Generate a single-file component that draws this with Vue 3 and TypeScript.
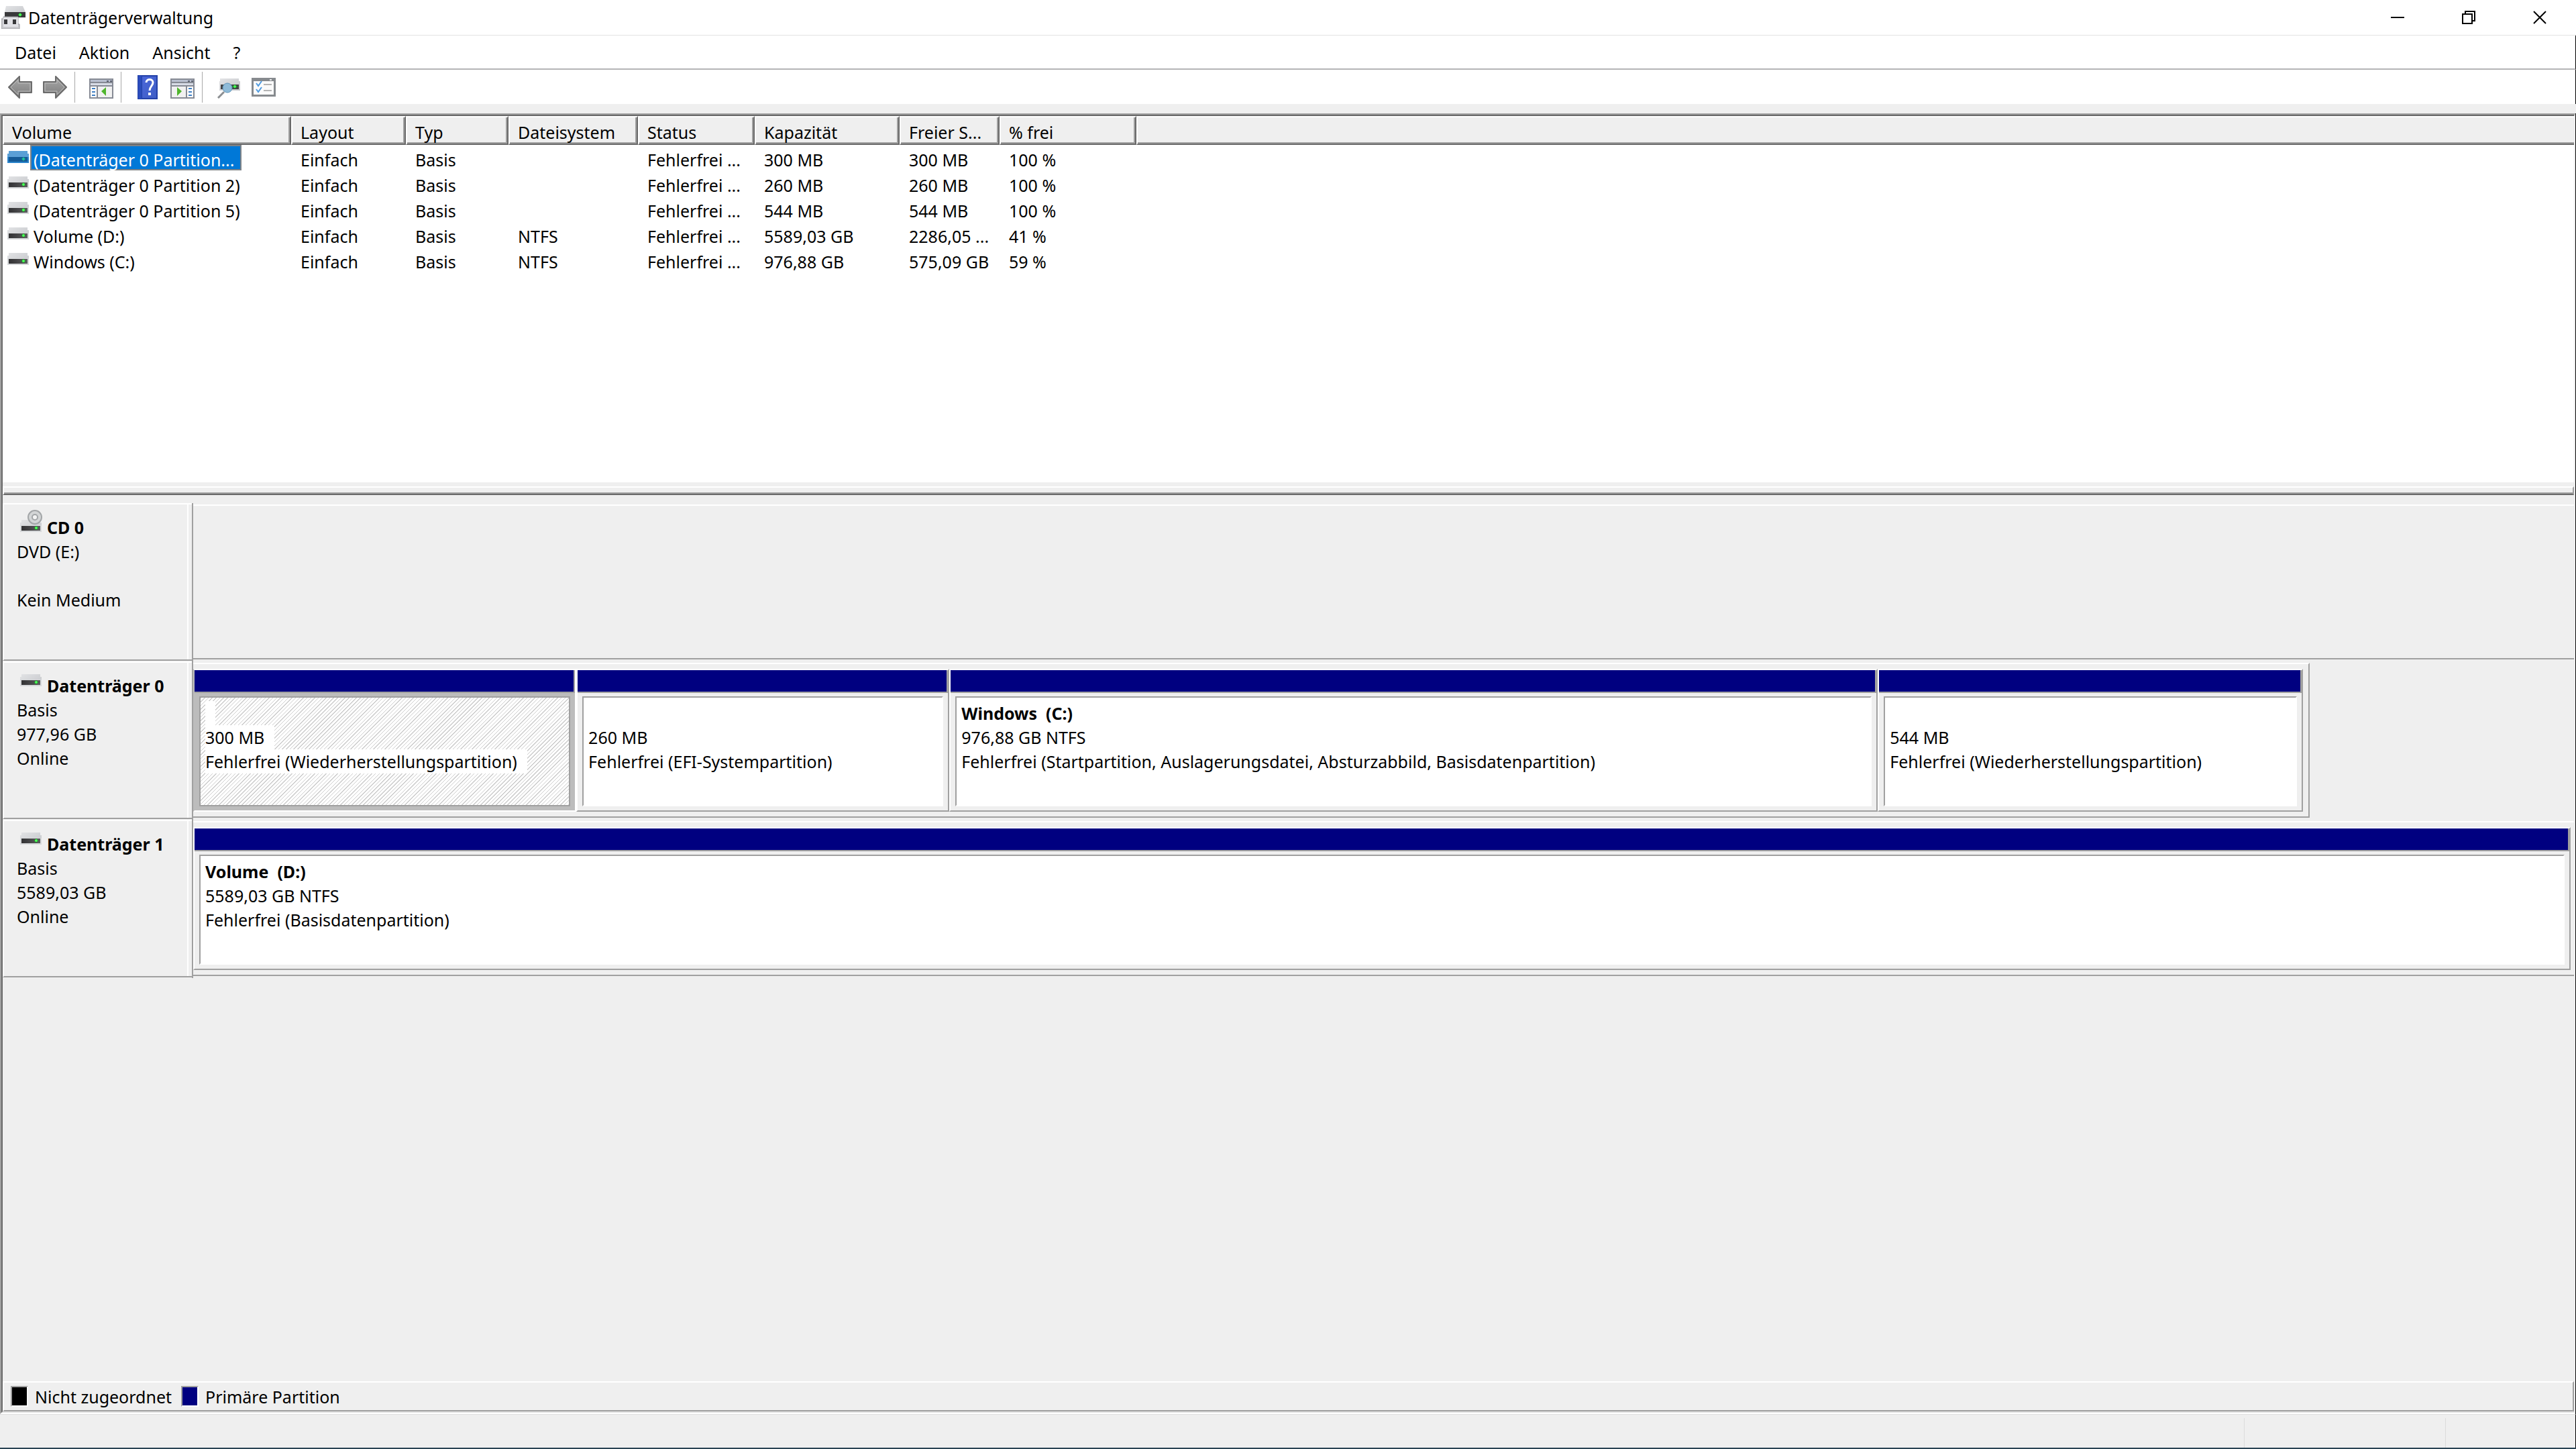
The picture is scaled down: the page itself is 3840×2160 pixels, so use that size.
<script setup lang="ts">
import { ref } from 'vue'

interface Volume {
  name: string
  layout: string
  type: string
  fs: string
  status: string
  capacity: string
  free: string
  percent: string
}

interface Partition {
  title: string
  size: string
  state: string
  share: number
  selected?: boolean
}

interface Disk {
  name: string
  kind: 'cd' | 'hdd'
  lines: string[]
  extent: number
  partitions: Partition[]
}

const menus = ['Datei', 'Aktion', 'Ansicht', '?']

const columns = ['Volume', 'Layout', 'Typ', 'Dateisystem', 'Status', 'Kapazität', 'Freier S...', '% frei', '']

const volumes: Volume[] = [
  { name: '(Datenträger 0 Partition...', layout: 'Einfach', type: 'Basis', fs: '', status: 'Fehlerfrei ...', capacity: '300 MB', free: '300 MB', percent: '100 %' },
  { name: '(Datenträger 0 Partition 2)', layout: 'Einfach', type: 'Basis', fs: '', status: 'Fehlerfrei ...', capacity: '260 MB', free: '260 MB', percent: '100 %' },
  { name: '(Datenträger 0 Partition 5)', layout: 'Einfach', type: 'Basis', fs: '', status: 'Fehlerfrei ...', capacity: '544 MB', free: '544 MB', percent: '100 %' },
  { name: 'Volume (D:)', layout: 'Einfach', type: 'Basis', fs: 'NTFS', status: 'Fehlerfrei ...', capacity: '5589,03 GB', free: '2286,05 ...', percent: '41 %' },
  { name: 'Windows (C:)', layout: 'Einfach', type: 'Basis', fs: 'NTFS', status: 'Fehlerfrei ...', capacity: '976,88 GB', free: '575,09 GB', percent: '59 %' },
]

const selectedRow = ref(0)

const disks: Disk[] = [
  { name: 'CD 0', kind: 'cd', lines: ['DVD (E:)', '', 'Kein Medium'], extent: 100, partitions: [] },
  {
    name: 'Datenträger 0',
    kind: 'hdd',
    lines: ['Basis', '977,96 GB', 'Online'],
    extent: 88.9,
    partitions: [
      { title: '', size: '300 MB', state: 'Fehlerfrei (Wiederherstellungspartition)', share: 570, selected: true },
      { title: '', size: '260 MB', state: 'Fehlerfrei (EFI-Systempartition)', share: 555 },
      { title: 'Windows  (C:)', size: '976,88 GB NTFS', state: 'Fehlerfrei (Startpartition, Auslagerungsdatei, Absturzabbild, Basisdatenpartition)', share: 1387 },
      { title: '', size: '544 MB', state: 'Fehlerfrei (Wiederherstellungspartition)', share: 633 },
    ],
  },
  {
    name: 'Datenträger 1',
    kind: 'hdd',
    lines: ['Basis', '5589,03 GB', 'Online'],
    extent: 100,
    partitions: [{ title: 'Volume  (D:)', size: '5589,03 GB NTFS', state: 'Fehlerfrei (Basisdatenpartition)', share: 1 }],
  },
]
</script>

<template>
  <div class="window">
    <svg class="defs" width="0" height="0" aria-hidden="true">
      <defs>
        <linearGradient id="lid" x1="0" y1="0" x2="1" y2="1">
          <stop offset="0" stop-color="#e2e3e5" />
          <stop offset="1" stop-color="#c3c5c9" />
        </linearGradient>
        <linearGradient id="face" x1="0" y1="0" x2="1" y2="0">
          <stop offset="0" stop-color="#323234" />
          <stop offset="1" stop-color="#5c5c5e" />
        </linearGradient>
        <linearGradient id="steel" x1="0" y1="0" x2="0" y2="1">
          <stop offset="0" stop-color="#a9a9a9" />
          <stop offset="1" stop-color="#7b7b7b" />
        </linearGradient>
        <linearGradient id="book" x1="0" y1="0" x2="1" y2="1">
          <stop offset="0" stop-color="#4a66d8" />
          <stop offset="1" stop-color="#3f5ec6" />
        </linearGradient>
        <symbol id="drive" viewBox="0 0 32 19">
          <path d="M2 0H30V4H32V18H0V4H2Z" fill="url(#lid)" />
          <path d="M0 8H32V18H0Z" fill="#d6d8da" />
          <path d="M2 9H30V16H2Z" fill="url(#face)" />
          <path d="M21 12H27M24 9V15" stroke="#1d8a26" stroke-width="2" />
          <circle cx="24" cy="12" r="2" fill="#4dff5a" />
        </symbol>
        <symbol id="drive-selected" viewBox="0 0 32 19">
          <path d="M2 0H30V4H32V18H0V4H2Z" fill="#5a9fd6" />
          <path d="M0 9H32V18H0Z" fill="#2a84cc" />
          <path d="M2 9H30V16H2Z" fill="#155a96" />
          <path d="M21 12H27M24 9V15" stroke="#127f8e" stroke-width="2" />
          <circle cx="24" cy="12" r="2" fill="#23c59a" />
        </symbol>
      </defs>
    </svg>

    <header class="titlebar">
      <svg class="app-icon" viewBox="0 0 36 34" width="36" height="34" aria-hidden="true">
        <path d="M7 0H32L36 9V17H5V9Z" fill="url(#lid)" />
        <path d="M5 9H36V17H5Z" fill="#39393b" />
        <path d="M25 13H31M28 10V16" stroke="#1d8a26" stroke-width="2" />
        <circle cx="28" cy="13" r="2" fill="#4dff5a" />
        <path d="M3 16H25V27H27V34H0V19H3Z" fill="#c9c9cd" stroke="#98989c" />
        <path d="M3 17H25V31H3Z" fill="#e2e2e6" />
        <path d="M4 20H9V27H4ZM17 20H22V27H17Z" fill="#3a3a3c" />
      </svg>
      <h1>Datenträgerverwaltung</h1>
      <div class="controls">
        <button type="button" aria-label="Minimieren">
          <svg viewBox="0 0 20 20" width="20" height="20"><path d="M0 10H20" stroke="#000" stroke-width="2" /></svg>
        </button>
        <button type="button" aria-label="Verkleinern">
          <svg viewBox="0 0 20 20" width="20" height="20"><path d="M1 5H15V19H1ZM5 5V1H19V15H15" fill="none" stroke="#000" stroke-width="2" /></svg>
        </button>
        <button type="button" aria-label="Schließen">
          <svg viewBox="0 0 20 20" width="20" height="20"><path d="M1 1L19 19M19 1L1 19" stroke="#000" stroke-width="2" /></svg>
        </button>
      </div>
    </header>

    <nav class="menubar">
      <button v-for="m in menus" :key="m" type="button">{{ m }}</button>
    </nav>

    <div class="toolbar">
      <button type="button" aria-label="Zurück">
        <svg viewBox="0 0 36 34" width="36" height="34">
          <path d="M1 17L17 1V9H35V25H17V33Z" fill="url(#steel)" stroke="#6c6c6c" stroke-width="2" stroke-linejoin="round" />
          <path d="M4 17L15 6V11H33V23H15V28Z" fill="none" stroke="#bdbdbd" />
        </svg>
      </button>
      <button type="button" aria-label="Vorwärts">
        <svg viewBox="0 0 36 34" width="36" height="34">
          <path d="M35 17L19 1V9H1V25H19V33Z" fill="url(#steel)" stroke="#6c6c6c" stroke-width="2" stroke-linejoin="round" />
          <path d="M32 17L21 6V11H3V23H21V28Z" fill="none" stroke="#bdbdbd" />
        </svg>
      </button>
      <span class="sep"></span>
      <button type="button" class="low" aria-label="Konsolenstruktur anzeigen">
        <svg viewBox="0 0 36 30" width="36" height="30">
          <path d="M0 0H36V30H0Z" fill="#868a94" />
          <path d="M2 2H34V5H2Z" fill="#b9c0d0" />
          <path d="M2 7H34V10H2Z" fill="#d8dce6" />
          <path d="M26 3H29V5H26ZM31 3H34V5H31Z" fill="#5c6270" />
          <path d="M2 12H11V28H2Z" fill="#fff" />
          <path d="M13 12H34V28H13Z" fill="#f1f1f1" />
          <path d="M4 15H9M4 20H9M4 25H9" stroke="#3f7fc4" stroke-width="2" />
          <path d="M25 13V26L18 19Z" fill="#4fb52d" />
        </svg>
      </button>
      <span class="sep"></span>
      <button type="button" aria-label="Hilfe">
        <svg viewBox="0 0 30 36" width="30" height="36">
          <path d="M0 0H30V36H0Z" fill="#2341a8" />
          <path d="M7 2H28V34H7Z" fill="url(#book)" />
          <path d="M1 1H6V35H1Z" fill="#2b4cbc" />
          <path d="M13 11C13 5 23 5 23 11C23 16 18 17 18 23" fill="none" stroke="#fff" stroke-width="3" />
          <path d="M16 26H20V30H16Z" fill="#fff" />
        </svg>
      </button>
      <button type="button" class="low" aria-label="Aktionsbereich anzeigen">
        <svg viewBox="0 0 36 30" width="36" height="30">
          <path d="M0 0H36V30H0Z" fill="#868a94" />
          <path d="M2 2H34V5H2Z" fill="#b9c0d0" />
          <path d="M2 7H34V10H2Z" fill="#d8dce6" />
          <path d="M26 3H29V5H26ZM31 3H34V5H31Z" fill="#5c6270" />
          <path d="M25 12H34V28H25Z" fill="#fff" />
          <path d="M2 12H23V28H2Z" fill="#f1f1f1" />
          <path d="M27 15H32M27 20H32M27 25H32" stroke="#3f7fc4" stroke-width="2" />
          <path d="M10 13V26L17 19Z" fill="#4fb52d" />
        </svg>
      </button>
      <span class="sep"></span>
      <button type="button" class="low" aria-label="Datenträger neu einlesen">
        <svg viewBox="0 0 34 30" width="34" height="30">
          <path d="M4 0H32V4H34V18H3V4H4Z" fill="url(#lid)" />
          <path d="M5 9H32V16H5Z" fill="#444446" />
          <path d="M22 12H30M26 9V15" stroke="#1d8a26" stroke-width="2" />
          <circle cx="26" cy="12" r="2" fill="#4dff5a" />
          <path d="M1 29L10 20" stroke="#8c8f92" stroke-width="3" />
          <circle cx="15" cy="14" r="7" fill="#8fbbd8" stroke="#5d93b8" />
        </svg>
      </button>
      <button type="button" aria-label="Eigenschaften">
        <svg viewBox="0 0 36 28" width="36" height="28">
          <path d="M0 0H36V28H0Z" fill="#868a8e" />
          <path d="M3 5H33V25H3Z" fill="#fbfbfb" />
          <path d="M27 2H30V4H27Z" fill="#e8e8e8" />
          <path d="M7 8L10 12L15 5M7 17L10 21L15 14" fill="none" stroke="#4f9be0" stroke-width="2" />
          <path d="M18 10H30M18 19H30" stroke="#b4b4b4" stroke-width="2" />
        </svg>
      </button>
    </div>

    <main class="frame">
      <div class="frame-inner">
        <section class="list">
          <table>
            <colgroup>
              <col class="w-volume" /><col class="w-layout" /><col class="w-type" /><col class="w-fs" />
              <col class="w-status" /><col class="w-capacity" /><col class="w-free" /><col class="w-percent" /><col />
            </colgroup>
            <thead>
              <tr>
                <th v-for="(c, i) in columns" :key="i" scope="col">{{ c }}</th>
              </tr>
            </thead>
            <tbody>
              <tr v-for="(v, i) in volumes" :key="v.name" @click="selectedRow = i">
                <td class="name">
                  <div class="name-box">
                    <svg class="row-icon" viewBox="0 0 32 19" width="32" height="19" aria-hidden="true">
                      <use :href="i === selectedRow ? '#drive-selected' : '#drive'" />
                    </svg>
                    <span class="name-text" :class="{ selected: i === selectedRow }">{{ v.name }}</span>
                  </div>
                </td>
                <td>{{ v.layout }}</td>
                <td>{{ v.type }}</td>
                <td>{{ v.fs }}</td>
                <td>{{ v.status }}</td>
                <td>{{ v.capacity }}</td>
                <td>{{ v.free }}</td>
                <td>{{ v.percent }}</td>
                <td></td>
              </tr>
            </tbody>
          </table>
        </section>

        <div class="splitter"></div>

        <section class="disks">
          <article v-for="d in disks" :key="d.name" class="disk">
            <div class="disk-label">
              <h2>
                <svg v-if="d.kind === 'cd'" class="disk-icon cd" viewBox="0 0 34 34" width="34" height="34" aria-hidden="true">
                  <use href="#drive" x="0" y="15" width="32" height="19" />
                  <circle cx="22" cy="11" r="10" fill="#d3d5d6" stroke="#a3a6a8" stroke-width="2" />
                  <circle cx="22" cy="11" r="4" fill="#f4f4f4" stroke="#a3a6a8" stroke-width="2" />
                </svg>
                <svg v-else class="disk-icon" viewBox="0 0 32 19" width="32" height="19" aria-hidden="true">
                  <use href="#drive" />
                </svg>
                {{ d.name }}
              </h2>
              <p v-for="(l, i) in d.lines" :key="i">{{ l }}</p>
            </div>
            <div class="disk-graph">
              <div
                class="strip"
                :class="{ closed: d.extent < 100 }"
                :style="{ width: d.extent + '%' }"
              >
                <div
                  v-for="(p, i) in d.partitions"
                  :key="i"
                  class="tile"
                  :class="{ selected: p.selected }"
                  :style="{ flexGrow: p.share }"
                >
                  <div class="bar"></div>
                  <div class="tile-frame">
                    <div class="tile-box">
                      <strong>{{ p.title }}</strong>
                      <span>{{ p.size }}</span>
                      <span>{{ p.state }}</span>
                    </div>
                  </div>
                </div>
              </div>
            </div>
          </article>
        </section>

        <footer class="legend">
          <i class="swatch black"></i><span>Nicht zugeordnet</span>
          <i class="swatch navy"></i><span>Primäre Partition</span>
        </footer>
      </div>
    </main>

    <div class="statusbar"><span></span><span></span><span></span></div>
  </div>
</template>

<style>
body {
  margin: 0;
}
</style>

<style scoped>
.window {
  box-sizing: border-box;
  display: flex;
  flex-direction: column;
  min-height: 100vh;
  border-bottom: 2px solid #2a4354;
  background: #efefef;
  color: #000;
  font-family: 'Noto Sans', 'Open Sans', sans-serif;
  font-size: 25px;
  line-height: 36px;
}
.window *,
.window *::before {
  box-sizing: border-box;
}
.defs {
  position: absolute;
}
h1,
h2,
p {
  margin: 0;
  font-size: 25px;
}
button {
  margin: 0;
  padding: 0;
  border: 0;
  background: none;
  color: inherit;
  font: inherit;
}
svg {
  display: block;
}

.titlebar {
  display: flex;
  align-items: center;
  height: 53px;
  padding: 0 1px 0 2px;
  border-bottom: 1px solid #e3e3e3;
  background: #fff;
}
.titlebar h1 {
  margin-left: 4px;
  font-weight: 400;
}
.controls {
  display: flex;
  margin-left: auto;
}
.controls button {
  display: flex;
  align-items: center;
  justify-content: center;
  width: 106px;
  height: 50px;
}

.menubar {
  display: flex;
  gap: 34px;
  height: 51px;
  padding: 7px 22px 0;
  border-right: 1px solid #000;
  border-bottom: 2px solid #b4b4b6;
  background: #fff;
}
.menubar button {
  height: 36px;
}

.toolbar {
  display: flex;
  align-items: center;
  height: 51px;
  padding-left: 4px;
  border-right: 1px solid #000;
  background: #fff;
}
.toolbar button {
  display: flex;
  align-items: center;
  justify-content: center;
  width: 52px;
  height: 48px;
}
.toolbar .low {
  padding-top: 4px;
}
.sep {
  width: 1px;
  height: 46px;
  margin: 0 13px 0 3px;
  background: #a8a8a8;
}

.frame {
  display: flex;
  flex: 1;
  margin-top: 14px;
  border: solid;
  border-width: 2px 1px 2px 2px;
  border-color: #a0a0a0 #fff #fff #a0a0a0;
  box-shadow: 1px 0 #000;
  margin-right: 1px;
}
.frame-inner {
  display: flex;
  flex: 1;
  flex-direction: column;
  min-width: 0;
  border: solid;
  border-width: 2px 1px 2px 2px;
  border-color: #696969 #e3e3e3 #e3e3e3 #696969;
}

.list {
  flex: 546 0 0;
  background: #fff;
}
table {
  width: 100%;
  border-spacing: 0;
  table-layout: fixed;
}
.w-volume { width: 430px; }
.w-layout { width: 171px; }
.w-type { width: 153px; }
.w-fs { width: 193px; }
.w-status { width: 174px; }
.w-capacity { width: 216px; }
.w-free { width: 149px; }
.w-percent { width: 204px; }
th {
  height: 43px;
  padding: 4px 8px 0 12px;
  border: 2px solid;
  border-color: #fff #696969 #696969 #fff;
  background: #efefef;
  box-shadow: inset -2px -2px #a0a0a0;
  font-weight: 400;
  line-height: 34px;
  text-align: left;
  white-space: nowrap;
}
th:last-child {
  border-right: 0;
  box-shadow: inset 0 -2px #a0a0a0;
}
td {
  height: 38px;
  padding: 6px 0 0 14px;
  line-height: 32px;
  white-space: nowrap;
}
td.name {
  padding: 0 0 0 7px;
}
.name-box {
  display: flex;
  gap: 2px;
}
.row-icon {
  margin-top: 9px;
}
.name-text {
  height: 38px;
  padding: 4px 9px 0 3px;
  border: 2px solid transparent;
}
.name-text.selected {
  border-color: #7d8287;
  background: #0078d7;
  color: #fff;
}

.splitter {
  height: 13px;
  margin-top: 6px;
  border-top: 2px solid #fff;
  border-right: 2px solid #a0a0a0;
  border-bottom: 2px solid #696969;
  border-left: 2px solid #fff;
  box-shadow: inset 0 -2px #a0a0a0;
}

.disks {
  flex: 1310 0 0;
  padding-top: 12px;
}
.disk {
  display: flex;
  height: 236px;
}
.disk-label {
  flex: none;
  width: 282px;
  height: 235px;
  padding: 16px 8px 0 19px;
  border-top: 2px solid #fff;
  border-bottom: 2px solid #a0a0a0;
  border-left: 2px solid #fff;
  box-shadow: inset -5px 0 #efefef, inset -7px 0 #fff;
}
.disk-label h2 {
  display: flex;
  gap: 8px;
  height: 36px;
  padding-left: 5px;
  white-space: nowrap;
}
.disk-label p {
  height: 36px;
}
.disk-icon {
  flex: none;
  margin-top: 1px;
}
.disk-icon.cd {
  margin: -8px -2px 0 0;
}
.disk-graph {
  flex: 1;
  min-width: 0;
  border-left: 2px solid #a0a0a0;
}
.strip {
  display: flex;
  height: 231px;
  margin-top: 2px;
  padding: 7px 5px 7px 0;
  border-top: 2px solid #fff;
  border-bottom: 2px solid #a0a0a0;
}
.strip.closed {
  padding-right: 8px;
  border-right: 2px solid #a0a0a0;
}
.tile {
  display: flex;
  flex: 1 0 0;
  flex-direction: column;
  min-width: 0;
  border: 2px solid;
  border-color: #fff #a0a0a0 #a0a0a0 #fff;
}
.bar {
  flex: none;
  height: 34px;
  border: solid #a0a0a0;
  border-width: 0 2px 2px 0;
  background: #000080;
}
.tile-frame {
  display: flex;
  flex: 1;
  padding: 5px 7px 6px;
}
.tile-box {
  display: flex;
  flex: 1;
  flex-direction: column;
  align-items: flex-start;
  min-width: 0;
  padding: 5px 7px 0;
  border: 2px solid;
  border-color: #a0a0a0 #fff #fff #a0a0a0;
  background: #fff;
  white-space: pre;
}
.tile-box > * {
  height: 36px;
}
.tile.selected {
  border-color: #fff #fff #fff #bcbcbc;
}
.selected .tile-frame {
  background: #bcbcbc;
}
.selected .tile-box {
  border-color: #a0a0a0;
  background: repeating-linear-gradient(135deg, #cecece 0 1px, #fff 1px 4px);
}
.selected .tile-box > * {
  padding-right: 15px;
  background: #fff;
}

.legend {
  display: flex;
  align-items: center;
  height: 45px;
  padding-left: 10px;
  border: 2px solid;
  border-color: #fff #a0a0a0 #a0a0a0 #fff;
}
.legend span {
  margin: 0 14px 0 10px;
}
.swatch {
  width: 26px;
  height: 31px;
  border: 2px solid;
  border-color: #a0a0a0 #fff #fff #a0a0a0;
}
.black {
  background: #000;
}
.navy {
  background: #000080;
}

.statusbar {
  display: grid;
  grid-template-columns: 1fr 300px 194px;
  height: 50px;
  padding-top: 5px;
  border-top: 1px solid #dedede;
  border-right: 1px solid #000;
}
.statusbar span + span {
  border-left: 1px solid #dcdcdc;
}
</style>
